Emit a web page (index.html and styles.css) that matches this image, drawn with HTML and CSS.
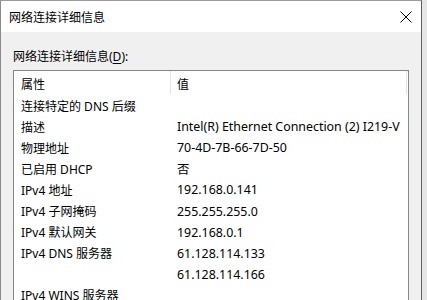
FILE: index.html
```html
<!DOCTYPE html>
<html lang="zh-CN">
<head>
    <meta charset="UTF-8">
    <title>网络连接详细信息</title>
    <link rel="stylesheet" href="styles.css">
</head>
<body>
    <div class="window">
        <div class="titlebar">
            <div class="title-text">网络连接详细信息</div>
            <div class="close-btn">
                <svg width="12" height="12" viewBox="0 0 12 12">
                    <path d="M0.5 0.5 L11.5 11.5 M11.5 0.5 L0.5 11.5" stroke="#000" stroke-width="1" fill="none"/>
                </svg>
            </div>
        </div>

        <div class="content">
            <div class="group-label">网络连接详细信息(<u>D</u>):</div>

            <div class="listbox">
                <div class="list-header">
                    <div class="col col-prop">属性</div>
                    <div class="col col-val">值</div>
                </div>
                <div class="row"><div class="cell-prop">连接特定的 DNS 后缀</div><div class="cell-val"></div></div>
                <div class="row"><div class="cell-prop">描述</div><div class="cell-val">Intel(R) Ethernet Connection (2) I219-V</div></div>
                <div class="row"><div class="cell-prop">物理地址</div><div class="cell-val">70-4D-7B-66-7D-50</div></div>
                <div class="row"><div class="cell-prop">已启用 DHCP</div><div class="cell-val">否</div></div>
                <div class="row"><div class="cell-prop">IPv4 地址</div><div class="cell-val">192.168.0.141</div></div>
                <div class="row"><div class="cell-prop">IPv4 子网掩码</div><div class="cell-val">255.255.255.0</div></div>
                <div class="row"><div class="cell-prop">IPv4 默认网关</div><div class="cell-val">192.168.0.1</div></div>
                <div class="row"><div class="cell-prop">IPv4 DNS 服务器</div><div class="cell-val">61.128.114.133</div></div>
                <div class="row"><div class="cell-prop"></div><div class="cell-val">61.128.114.166</div></div>
                <div class="row"><div class="cell-prop">IPv4 WINS 服务器</div><div class="cell-val"></div></div>
                <div class="row"><div class="cell-prop"></div><div class="cell-val"></div></div>
            </div>
        </div>
    </div>
</body>
</html>
```

FILE: styles.css
```css
* {
    margin: 0;
    padding: 0;
    box-sizing: border-box;
}

html, body {
    height: 100%;
    overflow: hidden;
}

body {
    font-family: 'Noto Sans', 'Noto Sans CJK SC', sans-serif;
    font-size: 12px;
    color: #000;
    background: linear-gradient(to right, #c9c9c9, #e6e6e6);
    background-color: #dcdcdc;
}

.window {
    width: 422px;
    height: 100%;
    border-top: 1px solid #9a9a9a;
    border-left: 1px solid #8a8a8a;
    border-right: 1px solid #5f5f5f;
    background: #f0f0f0;
    display: flex;
    flex-direction: column;
}

.titlebar {
    height: 31px;
    background: #fff;
    display: flex;
    align-items: center;
    justify-content: space-between;
    padding: 0 9px 0 8px;
    flex-shrink: 0;
}

.title-text {
    font-size: 12px;
    padding-top: 1px;
}

.close-btn {
    display: flex;
    align-items: center;
    padding-top: 1px;
}

.content {
    flex: 1;
    padding: 15px 12px 0 12px;
    display: flex;
    flex-direction: column;
}

.group-label {
    height: 20px;
    line-height: 20px;
    margin-bottom: 3px;
}

.group-label u {
    text-decoration-thickness: 1px;
    text-underline-offset: 2px;
}

.listbox {
    flex: 1;
    width: 396px;
    background: #fff;
    border: 1px solid #828790;
    border-bottom: none;
    overflow: hidden;
}

.list-header {
    display: flex;
    height: 24px;
    align-items: stretch;
}

.list-header .col {
    display: flex;
    align-items: center;
    padding-top: 3px;
}

.col-prop {
    width: 157px;
    padding-left: 7px;
    border-right: 1px solid #e5e5e5;
    margin-bottom: 1px;
}

.col-val {
    width: 236px;
    padding-left: 6px;
    border-right: 1px solid #e5e5e5;
    margin-bottom: 1px;
}

.row {
    display: flex;
    height: 21.1px;
    align-items: center;
}

.cell-prop {
    width: 157px;
    padding-left: 7px;
    white-space: nowrap;
}

.cell-val {
    padding-left: 6px;
    white-space: nowrap;
    font-size: 12.4px;
}
```
